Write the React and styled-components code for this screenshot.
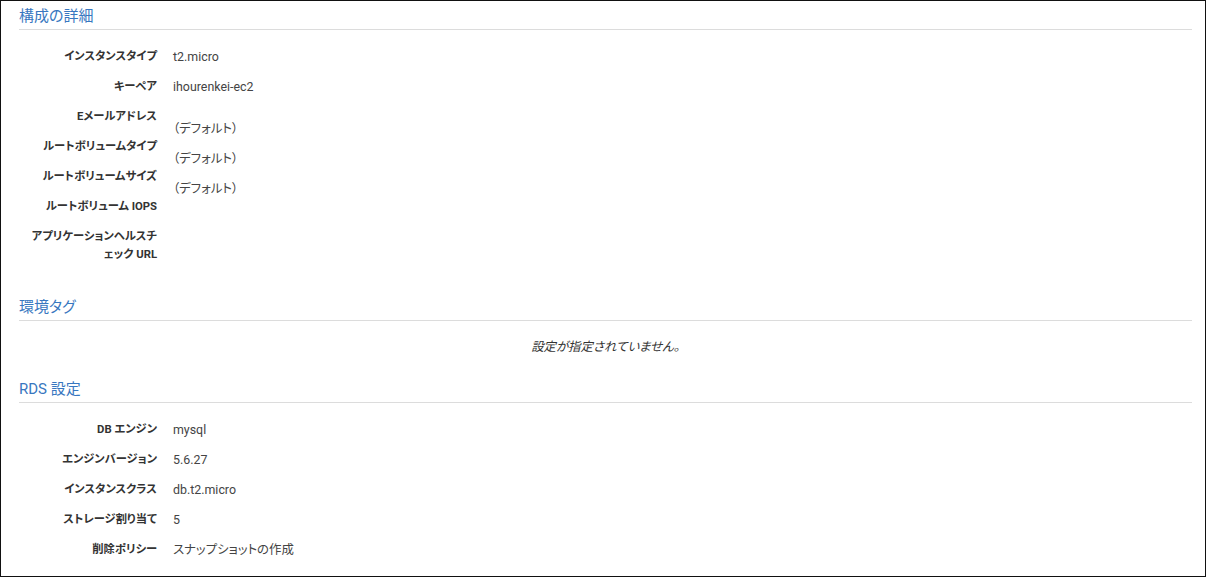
import styled, { createGlobalStyle } from "styled-components";

// 構成の詳細
const configRows = [
  { label: "インスタンスタイプ", value: "t2.micro" },
  { label: "キーペア", value: "ihourenkei-ec2" },
  { label: "Eメールアドレス", value: "（デフォルト）", shifted: true },
  { label: "ルートボリュームタイプ", value: "（デフォルト）", shifted: true },
  { label: "ルートボリュームサイズ", value: "（デフォルト）", shifted: true },
  { label: "ルートボリューム IOPS", value: "" },
  { label: "アプリケーションヘルスチェック URL", value: "" },
];

// RDS 設定
const rdsRows = [
  { label: "DB エンジン", value: "mysql" },
  { label: "エンジンバージョン", value: "5.6.27" },
  { label: "インスタンスクラス", value: "db.t2.micro" },
  { label: "ストレージ割り当て", value: "5" },
  { label: "削除ポリシー", value: "スナップショットの作成" },
];

const DetailList = ({ rows }) => (
  <RowList>
    {rows.map((item, i) => (
      <Row key={`${item.label}-${i}`}>
        <Label>{item.label}</Label>
        <Value $shifted={item.shifted}>{item.value}</Value>
      </Row>
    ))}
  </RowList>
);

export default function App() {
  return (
    <>
      <GlobalStyle />
      <Frame>
        <Section>
          <SectionTitle>構成の詳細</SectionTitle>
          <DetailList rows={configRows} />
        </Section>

        <Section>
          <SectionTitle>環境タグ</SectionTitle>
          <EmptyNote>設定が指定されていません。</EmptyNote>
        </Section>

        <Section>
          <SectionTitle>RDS 設定</SectionTitle>
          <DetailList rows={rdsRows} />
        </Section>
      </Frame>
    </>
  );
}

const GlobalStyle = createGlobalStyle`
  body {
    margin: 0;
    background: #fff;
    font-family: Roboto, "Noto Sans CJK JP", sans-serif;
    font-feature-settings: "palt";
  }
`;

const Frame = styled.div`
  box-sizing: border-box;
  width: 1206px;
  height: 577px;
  border: 1px solid #111;
  padding: 0 13px 0 18px;
  background: #fff;
  overflow: hidden;
`;

const Section = styled.section`
  & + & {
    margin-top: 20px;
  }
`;

const SectionTitle = styled.h2`
  margin: 0;
  padding: 5px 0 3px;
  font-size: 15px;
  line-height: 20px;
  font-weight: 400;
  color: #3877c0;
  border-bottom: 1px solid #dcdcdc;
`;

const RowList = styled.dl`
  margin: 0;
  padding: 12px 0 2px;
`;

const Row = styled.div`
  display: grid;
  grid-template-columns: 138px 1fr;
  column-gap: 16px;
  padding: 6px 0;
`;

const Label = styled.dt`
  padding-left: 12px;
  font-size: 11.3px;
  line-height: 18px;
  font-weight: 700;
  color: #333;
  text-align: right;
  line-break: loose;
`;

// 値が一段下にずれて表示される行がある
const Value = styled.dd`
  margin: ${(props) => (props.$shifted ? "12px 0 -12px" : "0")};
  font-size: 12.4px;
  line-height: 18px;
  color: #444;
`;

const EmptyNote = styled.p`
  margin: 0 0 -2px;
  padding-top: 17px;
  font-size: 12.4px;
  line-height: 18px;
  font-style: italic;
  color: #333;
  text-align: center;
`;
